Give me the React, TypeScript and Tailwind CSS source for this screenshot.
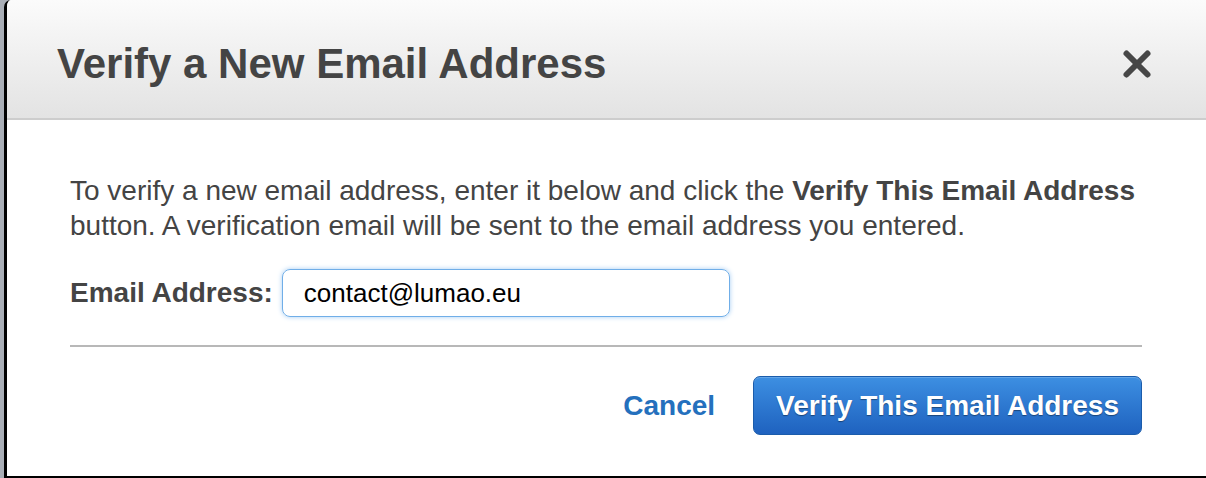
import { X } from 'lucide-react'

export default function App() {
  return (
    <div className="flex h-[478px] w-[1206px] overflow-hidden bg-[#a9aeb6] font-['Liberation_Sans',Arial,sans-serif]">
      <div className="ml-[4px] flex flex-1 flex-col overflow-hidden rounded-tl-[7px] border-b-2 border-l-[3px] border-black bg-white">
        {/* header */}
        <div className="flex h-[120px] shrink-0 items-center justify-between border-b-2 border-[#cdcdcd] bg-gradient-to-b from-[#fbfbfb] to-[#e3e3e3] pl-[50px] pr-[48px] pt-[10px]">
          <h1 className="text-[42px] font-bold leading-none text-[#444444]">Verify a New Email Address</h1>
          <button className="text-[#474747]">
            <X size={42} strokeWidth={3.4} />
          </button>
        </div>

        {/* body */}
        <div className="flex flex-col pl-[63px] pr-[64px] pt-[53px]">
          <p className="text-[28px] leading-[35px] text-[#444444]">
            To verify a new email address, enter it below and click the <b>Verify This Email Address</b> button. A
            verification email will be sent to the email address you entered.
          </p>

          <div className="mt-[26px] flex items-center gap-[9px]">
            <label className="text-[28px] font-bold text-[#444444]">Email Address:</label>
            <input
              defaultValue="contact@lumao.eu"
              className="h-[48px] w-[448px] rounded-[8px] border border-[#70aee8] px-[21px] text-[26px] text-black shadow-[0_0_5px_#a6cdf3] outline-none"
            />
          </div>

          <div className="mt-[28px] h-[2px] bg-[#b8b8b8]" />

          <div className="mt-[29px] flex items-center justify-end gap-[38px]">
            <button className="text-[28px] font-bold text-[#2470bd]">Cancel</button>
            <button className="h-[59px] rounded-[7px] border border-[#1b5cab] bg-gradient-to-b from-[#3d8fe2] to-[#1f62bf] px-[22px] text-[28px] font-bold text-white shadow-[inset_0_1px_0_rgba(255,255,255,0.2)] [text-shadow:0_1px_1px_rgba(0,0,0,0.4)]">
              Verify This Email Address
            </button>
          </div>
        </div>
      </div>
    </div>
  )
}
